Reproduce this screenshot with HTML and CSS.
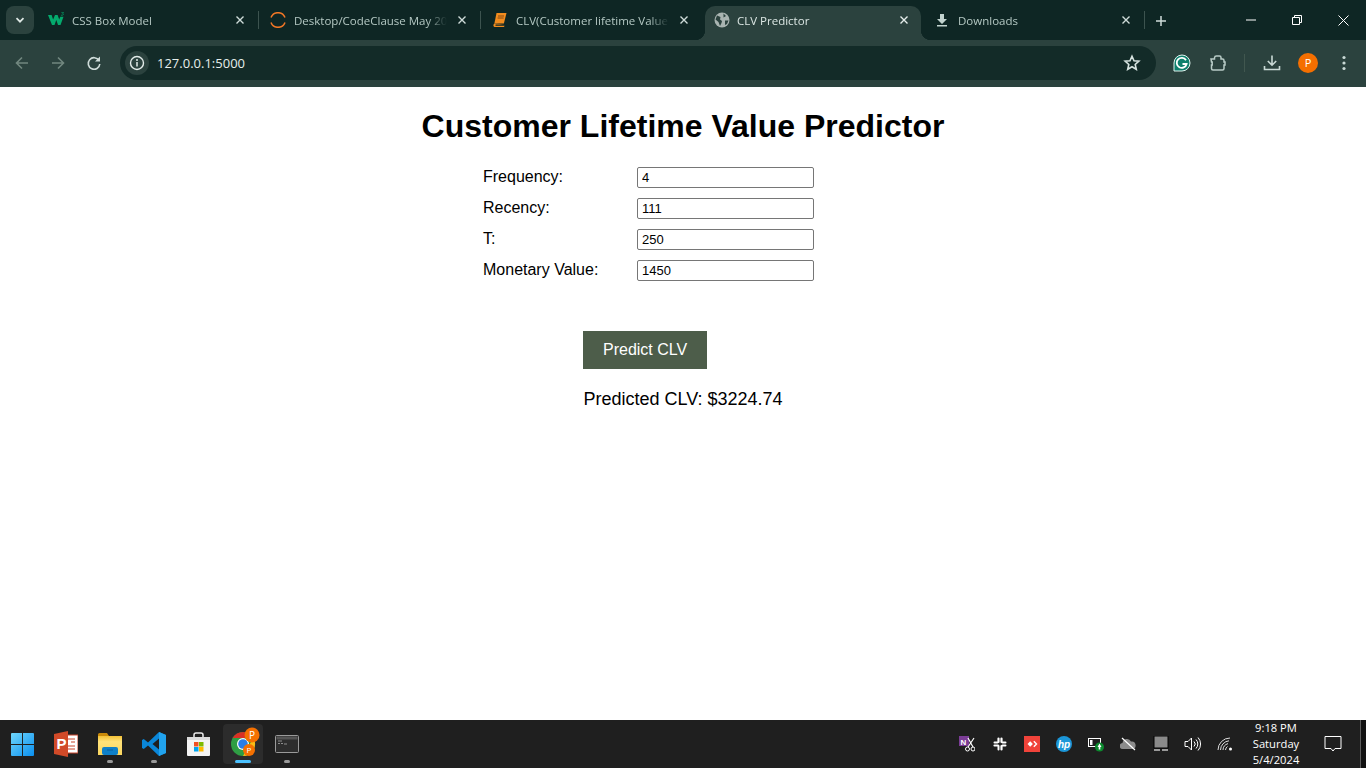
FILE: index.html
```html
<!DOCTYPE html>
<html lang="en">
<head>
    <meta charset="UTF-8">
    <meta name="viewport" content="width=device-width, initial-scale=1.0">
    <title>CLV Predictor</title>
    <link rel="stylesheet" href="styles.css">
</head>
<body>

    <!-- Browser tabs -->
    <div class="tabstrip">
        <div class="tab-search">
            <svg width="12" height="12" viewBox="0 0 12 12"><path d="M2.5 4.2 6 7.7l3.5-3.5" fill="none" stroke="#dfe9e6" stroke-width="1.7"/></svg>
        </div>
        <div class="tab sep">
            <svg class="favicon" width="16" height="16" viewBox="0 0 16 16"><path transform="translate(0 -.5) scale(1 .87)" d="M0 4h3.600l1.500 5.200L7 4h2.600l1.600 5.200L12.300 6h3.200l-3 9.500H10L8.300 9.800 6.500 15.500H4z" fill="#04aa6d"/><path d="M13 0h2.500l-1 1.300c1.200 0 1.200 1.900-.2 1.900H13" fill="none" stroke="#04aa6d" stroke-width=".7"/></svg>
            <span class="tab-title">CSS Box Model</span>
            <span class="tab-close"><svg width="10" height="10" viewBox="0 0 10 10"><path d="M1.500 1.500l7 7M8.500 1.500l-7 7" stroke="#cfdcd9" stroke-width="1.4"/></svg></span>
        </div>
        <div class="tab sep">
            <svg class="favicon" width="16" height="16" viewBox="0 0 16 16"><path d="M1 5.500A7.500 7.500 0 0 1 15 5.500M1 10.500A7.500 7.500 0 0 0 15 10.500" fill="none" stroke="#f37726" stroke-width="1.5"/></svg>
            <span class="tab-title">Desktop/CodeClause May 2024</span>
            <span class="tab-close"><svg width="10" height="10" viewBox="0 0 10 10"><path d="M1.500 1.500l7 7M8.500 1.500l-7 7" stroke="#cfdcd9" stroke-width="1.4"/></svg></span>
        </div>
        <div class="tab">
            <svg class="favicon" width="16" height="16" viewBox="0 0 16 16"><path d="M4.500 1h10l-2.600 10.500H2.400z" fill="#f28c1e"/><path d="M2.400 11.500c-1.500 1-1.200 3.500.6 3.500h9l.6-1.200H4c-1 0-1-1.300 0-1.300h8.500" fill="#f28c1e"/><path d="M6 4h6M5.600 6h6" stroke="#6a3a10" stroke-width=".8"/></svg>
            <span class="tab-title">CLV(Customer lifetime Value)</span>
            <span class="tab-close"><svg width="10" height="10" viewBox="0 0 10 10"><path d="M1.500 1.500l7 7M8.500 1.500l-7 7" stroke="#cfdcd9" stroke-width="1.4"/></svg></span>
        </div>
        <div class="tab active">
            <svg class="favicon" width="16" height="16" viewBox="0 0 16 16"><circle cx="8" cy="8" r="7.5" fill="#a9b4b1"/><path d="M3 3.500 6.500 5 6 7.500 8 9l-.5 2-1.500 3L4.500 10 1.500 7.500zM9.500 1.500 12 4 9.500 5.500zM11 8.500h3.500l-1.500 3.500-2 1z" fill="#2b423e"/></svg>
            <span class="tab-title">CLV Predictor</span>
            <span class="tab-close"><svg width="10" height="10" viewBox="0 0 10 10"><path d="M1.500 1.500l7 7M8.500 1.500l-7 7" stroke="#e6eeec" stroke-width="1.4"/></svg></span>
        </div>
        <div class="tab sep downloads">
            <svg class="favicon" width="16" height="16" viewBox="0 0 16 16"><path d="M6 2h4v5h3l-5 5-5-5h3zM3 13h10v1.500H3z" fill="#c2d3cf"/></svg>
            <span class="tab-title">Downloads</span>
            <span class="tab-close"><svg width="10" height="10" viewBox="0 0 10 10"><path d="M1.500 1.500l7 7M8.500 1.500l-7 7" stroke="#cfdcd9" stroke-width="1.4"/></svg></span>
        </div>
        <div class="tab-new">
            <svg width="10" height="10" viewBox="0 0 10 10"><path d="M5 0v10M0 5h10" stroke="#cfdcd9" stroke-width="1.5"/></svg>
        </div>
        <div class="window-controls">
            <div class="win-btn"><svg width="10" height="10" viewBox="0 0 10 10"><path d="M0 5h10" stroke="#fff"/></svg></div>
            <div class="win-btn"><svg width="10" height="10" viewBox="0 0 10 10"><path d="M.5 2.500h7v7h-7zM2.500 2.500v-2h7v7h-2" fill="none" stroke="#fff"/></svg></div>
            <div class="win-btn"><svg width="11" height="11" viewBox="0 0 11 11"><path d="M.5.500l10 10M10.500.500l-10 10" stroke="#fff"/></svg></div>
        </div>
    </div>

    <!-- Address bar -->
    <div class="toolbar">
        <div class="tool-btn"><svg width="16" height="16" viewBox="0 0 16 16"><path d="M14 8H2.500M8 2.500 2.500 8 8 13.500" fill="none" stroke="#71877f" stroke-width="1.6"/></svg></div>
        <div class="tool-btn"><svg width="16" height="16" viewBox="0 0 16 16"><path d="M2 8h11.500M8 2.500 13.500 8 8 13.500" fill="none" stroke="#71877f" stroke-width="1.6"/></svg></div>
        <div class="tool-btn"><svg width="16" height="16" viewBox="0 0 16 16"><path d="M13 5.500A5.800 5.800 0 1 0 13.800 9" fill="none" stroke="#cfdcd9" stroke-width="1.6"/><path d="M14 1.500V6.500H9z" fill="#cfdcd9"/></svg></div>
        <div class="omnibox">
            <div class="site-info">
                <svg width="16" height="16" viewBox="0 0 16 16"><circle cx="8" cy="8" r="6.5" fill="none" stroke="#e2ebe9" stroke-width="1.4"/><path d="M8 7v4.500" stroke="#e2ebe9" stroke-width="1.5"/><circle cx="8" cy="4.900" r="1" fill="#e2ebe9"/></svg>
            </div>
            <span class="url">127.0.0.1:5000</span>
            <svg class="star" width="18" height="18" viewBox="0 0 18 18"><path d="M9 2.200l2 4.500 4.900.5-3.700 3.300 1.100 4.800L9 12.800l-4.300 2.500 1.100-4.800L2.100 7.200 7 6.700z" fill="none" stroke="#d7e3e0" stroke-width="1.6"/></svg>
        </div>
        <div class="tool-btn"><svg width="18" height="18" viewBox="0 0 18 18"><path d="M9 1a8 8 0 1 1 0 16H1v-8a8 8 0 0 1 8-8z" fill="#0f7f6c" stroke="#dff3ee" stroke-width="1"/><path d="M13 6.200A5 5 0 1 0 13.600 10H9.500" fill="none" stroke="#fff" stroke-width="1.8"/></svg></div>
        <div class="tool-btn"><svg width="18" height="18" viewBox="0 0 18 18"><path d="M2 5h3.500V3.800a2 2 0 0 1 2-1.800h3a1.500 1.500 0 0 1 1.500 1.500V5h1.500a1.500 1.500 0 0 1 1.500 1.500V8h1v3h-1v3.500a1.500 1.500 0 0 1-1.500 1.500H4a1.500 1.500 0 0 1-1.500-1.500V11h.7V8h-.7z" fill="none" stroke="#b9ccc7" stroke-width="1.5"/></svg></div>
        <div class="tool-sep"></div>
        <div class="tool-btn"><svg width="18" height="18" viewBox="0 0 18 18"><path d="M9 1.500V11M4.800 7 9 11.200 13.200 7M1.500 12v3.500h15V12" fill="none" stroke="#c9d9d5" stroke-width="1.6"/></svg></div>
        <div class="tool-btn"><div class="avatar">P</div></div>
        <div class="tool-btn"><svg width="4" height="16" viewBox="0 0 4 16"><circle cx="2" cy="2.500" r="1.6" fill="#c9d9d5"/><circle cx="2" cy="8" r="1.6" fill="#c9d9d5"/><circle cx="2" cy="13.500" r="1.6" fill="#c9d9d5"/></svg></div>
    </div>

    <!-- The page itself -->
    <main class="page">
        <h1>Customer Lifetime Value Predictor</h1>
        <form class="clv-form">
            <div class="field">
                <label for="frequency">Frequency:</label>
                <input type="text" id="frequency" value="4">
            </div>
            <div class="field">
                <label for="recency">Recency:</label>
                <input type="text" id="recency" value="111">
            </div>
            <div class="field">
                <label for="age">T:</label>
                <input type="text" id="age" value="250">
            </div>
            <div class="field">
                <label for="monetary">Monetary Value:</label>
                <input type="text" id="monetary" value="1450">
            </div>
            <button type="button" class="predict-btn">Predict CLV</button>
        </form>
        <div class="result">Predicted CLV: $3224.74</div>
    </main>

    <!-- Windows taskbar -->
    <div class="taskbar">
        <div class="task-app">
            <svg width="23" height="23" viewBox="0 0 24 24">
                <defs><linearGradient id="winblue" x1="0" y1="0" x2="1" y2="1"><stop offset="0" stop-color="#6fd6fb"/><stop offset="1" stop-color="#0a8fef"/></linearGradient></defs>
                <path d="M0 1a1 1 0 0 1 1-1h10.500v11.500H0zM12.500 0H23a1 1 0 0 1 1 1v10.500H12.500zM0 12.500h11.500V24H1a1 1 0 0 1-1-1zM12.500 12.500H24V23a1 1 0 0 1-1 1H12.500z" fill="url(#winblue)"/>
            </svg>
        </div>
        <div class="task-app">
            <svg width="24" height="26" viewBox="0 0 24 26">
                <rect x="11" y="4" width="13" height="18" fill="#fff" stroke="#c8452a"/>
                <path d="M14 8h7M17 11h4M14 15h7M14 18h7" stroke="#c8452a"/>
                <path d="M0 3 14 0v26L0 23z" fill="#d14a28"/>
                <text x="2.500" y="18" class="ppt-letter">P</text>
            </svg>
        </div>
        <div class="task-app has-dot">
            <svg width="24" height="22" viewBox="0 0 24 22">
                <defs><linearGradient id="folder" x1="0" y1="0" x2="0" y2="1"><stop offset="0" stop-color="#f3c136"/><stop offset=".3" stop-color="#ffe27a"/><stop offset="1" stop-color="#fbd75f"/></linearGradient></defs>
                <path d="M0 1.500A1.500 1.500 0 0 1 1.500 0H9l2 3h-11z" fill="#c98a0a"/>
                <path d="M0 3h24v19H0z" fill="url(#folder)"/>
                <rect x="4" y="14" width="16" height="8" rx="2" fill="#0f80c8"/>
                <path d="M9 17h6" stroke="#0a5f9c"/>
            </svg>
        </div>
        <div class="task-app has-dot">
            <svg width="24" height="24" viewBox="0 0 24 24">
                <path d="M17 0 24 3v18l-7 3L6 13.500 1.800 17 0 16v-8l1.800-1L6 10.500zM17 6.500 10.500 12l6.500 5.500z" fill="#0a86d8"/>
                <path d="M17 0 24 3v18l-7 3V17.500 6.500z" fill="#21a3ee"/>
            </svg>
        </div>
        <div class="task-app">
            <svg width="23" height="24" viewBox="0 0 23 24">
                <path d="M7 7V3a2 2 0 0 1 2-2h5a2 2 0 0 1 2 2v4" fill="none" stroke="#eaeaea" stroke-width="1.5"/>
                <rect y="5" width="23" height="19" rx="1" fill="#f4f4f4"/>
                <rect y="5" width="23" height="3" fill="#dcdcdc"/>
                <rect x="7" y="10" width="4.500" height="4.500" fill="#f25022"/>
                <rect x="12" y="10" width="4.500" height="4.500" fill="#7fba00"/>
                <rect x="7" y="15" width="4.500" height="4.500" fill="#00a4ef"/>
                <rect x="12" y="15" width="4.500" height="4.500" fill="#ffb900"/>
            </svg>
        </div>
        <div class="task-app active">
            <svg width="34" height="34" viewBox="0 0 34 34">
                <circle cx="17" cy="17" r="12" fill="#2f9e44"/>
                <path d="M6.600 11A12 12 0 0 1 27.400 11H17z" fill="#d93025"/>
                <path d="M27.400 11A12 12 0 0 1 17 29L22 20z" fill="#f9bd16"/>
                <circle cx="17" cy="17" r="6" fill="#fff"/>
                <circle cx="17" cy="17" r="4.800" fill="#2a7de8"/>
                <circle cx="26" cy="8" r="7.5" fill="#f57000"/>
                <text x="26" y="11.500" class="badge-letter">P</text>
                <circle cx="23" cy="23" r="6" fill="#f57000"/>
                <text x="23" y="26" class="badge-letter small">P</text>
            </svg>
        </div>
        <div class="task-app has-dot">
            <svg width="24" height="18" viewBox="0 0 24 18">
                <rect x=".5" y=".5" width="23" height="17" rx="1" fill="#2d2d2d" stroke="#9a9a9a"/>
                <rect x="1.500" y="1.500" width="21" height="3" fill="#555"/>
                <path d="M3 6h4M3 8.500h2M6 8.500h2M9 9h3" stroke="#8e8e8e"/>
            </svg>
        </div>

        <div class="tray">
            <div class="tray-item">
                <svg width="16" height="16" viewBox="0 0 16 16">
                    <rect width="10" height="10" fill="#7b3d96"/>
                    <text x="1.500" y="8.500" class="tray-letter">N</text>
                    <path d="M9 2l5 9M15 2l-6 9" stroke="#fff" stroke-width="1.2"/>
                    <circle cx="8.500" cy="13" r="2" fill="none" stroke="#fff"/>
                    <circle cx="14" cy="13" r="2" fill="none" stroke="#fff"/>
                </svg>
            </div>
            <div class="tray-item">
                <svg width="14" height="14" viewBox="0 0 14 14"><g stroke="#fff" stroke-width="2.200" stroke-linecap="round"><path d="M5.500 1.500v3.500M1.500 8.500H5M8.500 5V1.500M8.500 9v3.500"/><path d="M1.500 5.500h3M9.500 8.500h3M5.500 9v3.500M9.500 5.500h3" stroke-width="2"/></g></svg>
            </div>
            <div class="tray-item">
                <svg width="16" height="16" viewBox="0 0 16 16"><rect width="16" height="16" fill="#f0433a"/><path d="M3.500 8l2.700-2.700L8.900 8l-2.700 2.700z" fill="#fff"/><path d="M9.800 5.300 12.500 8l-2.700 2.700" fill="none" stroke="#fff" stroke-width="1.4"/></svg>
            </div>
            <div class="tray-item">
                <svg width="16" height="16" viewBox="0 0 16 16"><circle cx="8" cy="8" r="8" fill="#1b96d8"/><text x="8" y="11.500" class="hp-letters">hp</text></svg>
            </div>
            <div class="tray-item">
                <svg width="16" height="16" viewBox="0 0 16 16"><rect x=".5" y="2.500" width="12" height="8" fill="none" stroke="#fff"/><rect x="2" y="4" width="2.500" height="5" fill="#fff"/><circle cx="11.500" cy="11" r="4.500" fill="#0c8a2e"/><path d="M11.500 7.500 13.500 11h-1.200v2.500h-1.600V11H9.500z" fill="#fff"/></svg>
            </div>
            <div class="tray-item">
                <svg width="16" height="16" viewBox="0 0 16 16"><path d="M3 13a3 3 0 0 1-.5-6A4.500 4.500 0 0 1 11 5.500 3.800 3.800 0 0 1 12.500 13z" fill="#8c8c8c"/><path d="M2 2l13 12" stroke="#fff" stroke-width="1.2"/></svg>
            </div>
            <div class="tray-item">
                <svg width="16" height="16" viewBox="0 0 16 16"><rect x="1" y="0" width="14" height="12" fill="#8a8a8a" stroke="#000"/><rect x="1" y="13" width="6" height="2" fill="#9a9a9a"/><rect x="9" y="13" width="6" height="2" fill="#9a9a9a"/></svg>
            </div>
            <div class="tray-item">
                <svg width="17" height="16" viewBox="0 0 17 16"><path d="M1 5.500h3L7.500 2v12L4 10.500H1z" fill="none" stroke="#fff"/><path d="M10 5.500a3.500 3.500 0 0 1 0 5M12 3.500a6.500 6.500 0 0 1 0 9M14 1.500a9.500 9.500 0 0 1 0 13" fill="none" stroke="#fff"/></svg>
            </div>
            <div class="tray-item">
                <svg width="16" height="16" viewBox="0 0 16 16"><path d="M1 14A12 12 0 0 1 13 2M3.500 14A9.500 9.500 0 0 1 12 4.800M6 14a7 7 0 0 1 5-6.400M8.500 14a4.500 4.500 0 0 1 2-3.500" fill="none" stroke="#ddd"/><circle cx="13.500" cy="13" r="1.5" fill="#fff"/></svg>
            </div>
        </div>
        <div class="clock">
            <div>9:18 PM</div>
            <div>Saturday</div>
            <div>5/4/2024</div>
        </div>
        <div class="notify">
            <svg width="18" height="16" viewBox="0 0 18 16"><path d="M1 .500h16v12H11l-2 2.500-2-2.500H1z" fill="none" stroke="#fff"/></svg>
        </div>
        <div class="show-desktop"></div>
    </div>

</body>
</html>
```

FILE: styles.css
```css
body {
    margin: 0;
    height: 100vh;
    display: flex;
    flex-direction: column;
    overflow: hidden;
    background-color: #fff;
    font-family: "Liberation Sans", Arial, sans-serif;
}

/* tab strip */
.tabstrip {
    height: 40px;
    display: flex;
    flex-shrink: 0;
    background-color: #0e2624;
    font-family: "Open Sans", "Noto Sans", sans-serif;
    font-size: 11.5px;
    color: #b4c8c3;
}
.tab-search {
    width: 28px;
    height: 28px;
    margin: 6px 3px 0 6px;
    display: flex;
    align-items: center;
    justify-content: center;
    border-radius: 8px;
    background-color: #2b423e;
}
.tab {
    position: relative;
    width: 222px;
    box-sizing: border-box;
    padding: 0 12px 0 11px;
    display: flex;
    align-items: center;
    gap: 8px;
}
.tab.sep::after {
    content: "";
    position: absolute;
    right: 0;
    top: 11px;
    width: 1px;
    height: 18px;
    background-color: #3c534f;
}
.tab.active {
    color: #dbe6e3;
    background-color: #2b423e;
    border-radius: 10px 10px 0 0;
    margin: 6px 4px 0 2px;
    padding: 0 10px 6px 9px;
    width: 216px;
    gap: 7px;
}
.tab.active::before,
.tab.active::after {
    content: "";
    position: absolute;
    bottom: 0;
    width: 10px;
    height: 10px;
}
.tab.active::before {
    left: -10px;
    background: radial-gradient(circle at 0 0, transparent 10px, #2b423e 10.5px);
}
.tab.active::after {
    right: -10px;
    background: radial-gradient(circle at 100% 0, transparent 10px, #2b423e 10.5px);
}
.tab.downloads {
    margin-left: -2px;
}
.favicon {
    flex-shrink: 0;
}
.tab-title {
    flex: 1;
    white-space: nowrap;
    overflow: hidden;
    -webkit-mask-image: linear-gradient(to right, #000 calc(100% - 20px), transparent);
    mask-image: linear-gradient(to right, #000 calc(100% - 20px), transparent);
}
.tab-close {
    width: 14px;
    display: flex;
    justify-content: center;
}
.tab-new {
    width: 28px;
    margin-left: 2px;
    padding-top: 14px;
    box-sizing: border-box;
    text-align: center;
}
.window-controls {
    margin-left: auto;
    display: flex;
}
.win-btn {
    width: 46px;
    height: 40px;
    display: flex;
    align-items: center;
    justify-content: center;
}

/* address bar */
.toolbar {
    height: 47px;
    box-sizing: border-box;
    flex-shrink: 0;
    padding: 6px 4px 0;
    display: flex;
    background-color: #2b423e;
}
.tool-btn {
    width: 36px;
    height: 34px;
    display: flex;
    align-items: center;
    justify-content: center;
}
.tool-sep {
    width: 1px;
    height: 18px;
    margin: 8px 9px 0 8px;
    background-color: #41574f;
}
.omnibox {
    flex: 1;
    height: 34px;
    margin: 0 8px;
    padding: 0 15px 0 5px;
    display: flex;
    align-items: center;
    border-radius: 17px;
    background-color: #132b28;
}
.site-info {
    width: 24px;
    height: 24px;
    display: flex;
    align-items: center;
    justify-content: center;
    border-radius: 50%;
    background-color: #2b423e;
}
.url {
    flex: 1;
    margin-left: 8px;
    font-family: "Open Sans", "Noto Sans", sans-serif;
    font-size: 13px;
    color: #e6eeec;
}
.avatar {
    width: 20px;
    height: 20px;
    line-height: 20px;
    text-align: center;
    border-radius: 50%;
    font-size: 11px;
    color: #fff;
    background-color: #f56f00;
    font-family: "Open Sans", sans-serif;
}

/* page */
.page {
    flex: 1;
}
h1 {
    margin: 21px 0 22px;
    text-align: center;
    font-size: 32px;
    color: #000;
}
.clv-form {
    width: 400px;
    margin: 0 auto;
}
.field {
    display: flex;
    margin-bottom: 10px;
}
.field label {
    width: 154px;
    font-size: 16px;
    line-height: 20px;
}
.field input {
    width: 177px;
    height: 21px;
    box-sizing: border-box;
    padding: 1px 4px;
    border: 1px solid #767676;
    border-radius: 2px;
    font-family: "Liberation Sans", Arial, sans-serif;
    font-size: 13px;
}
.predict-btn {
    display: block;
    margin: 50px 0 0 100px;
    padding: 10px 20px;
    border: none;
    font-family: "Liberation Sans", Arial, sans-serif;
    font-size: 16px;
    color: #fff;
    background-color: #4d5d4a;
}
.result {
    margin-top: 20px;
    text-align: center;
    font-size: 18px;
    color: #000;
}

/* taskbar */
.taskbar {
    height: 48px;
    flex-shrink: 0;
    display: flex;
    align-items: center;
    background-color: #1f1f1f;
    font-family: "Open Sans", "Noto Sans", sans-serif;
}
.task-app {
    position: relative;
    width: 44.15px;
    height: 48px;
    display: flex;
    align-items: center;
    justify-content: center;
}
.task-app.has-dot::after,
.task-app.active::after {
    content: "";
    position: absolute;
    bottom: 5px;
    left: 50%;
    width: 6px;
    height: 3px;
    margin-left: -3px;
    border-radius: 2px;
    background-color: #9a9a9a;
}
.task-app.active::before {
    content: "";
    position: absolute;
    inset: 4px 2px;
    border-radius: 4px;
    background-color: #2c2c2c;
}
.task-app.active::after {
    width: 16px;
    margin-left: -8px;
    background-color: #4cc2ff;
}
.task-app svg {
    position: relative;
}
.ppt-letter {
    font: bold 15px "Liberation Sans", sans-serif;
    fill: #fff;
}
.badge-letter {
    font: 10px "Open Sans", sans-serif;
    fill: #fff;
    text-anchor: middle;
}
.badge-letter.small {
    font-size: 8px;
}
.tray-letter {
    font: bold 8px "Liberation Sans", sans-serif;
    fill: #fff;
}
.hp-letters {
    font: italic bold 10px "Liberation Sans", sans-serif;
    fill: #fff;
    text-anchor: middle;
}
.tray {
    margin-left: auto;
    display: flex;
}
.tray-item {
    width: 32.2px;
    height: 48px;
    display: flex;
    align-items: center;
    justify-content: center;
}
.clock {
    width: 70px;
    text-align: center;
    font-size: 11.2px;
    line-height: 16px;
    color: #fff;
}
.notify {
    width: 44px;
    display: flex;
    justify-content: center;
}
.show-desktop {
    width: 5px;
    height: 48px;
    margin-left: 5px;
    border-left: 1px solid #5c5c5c;
    background-color: #111;
}
```
